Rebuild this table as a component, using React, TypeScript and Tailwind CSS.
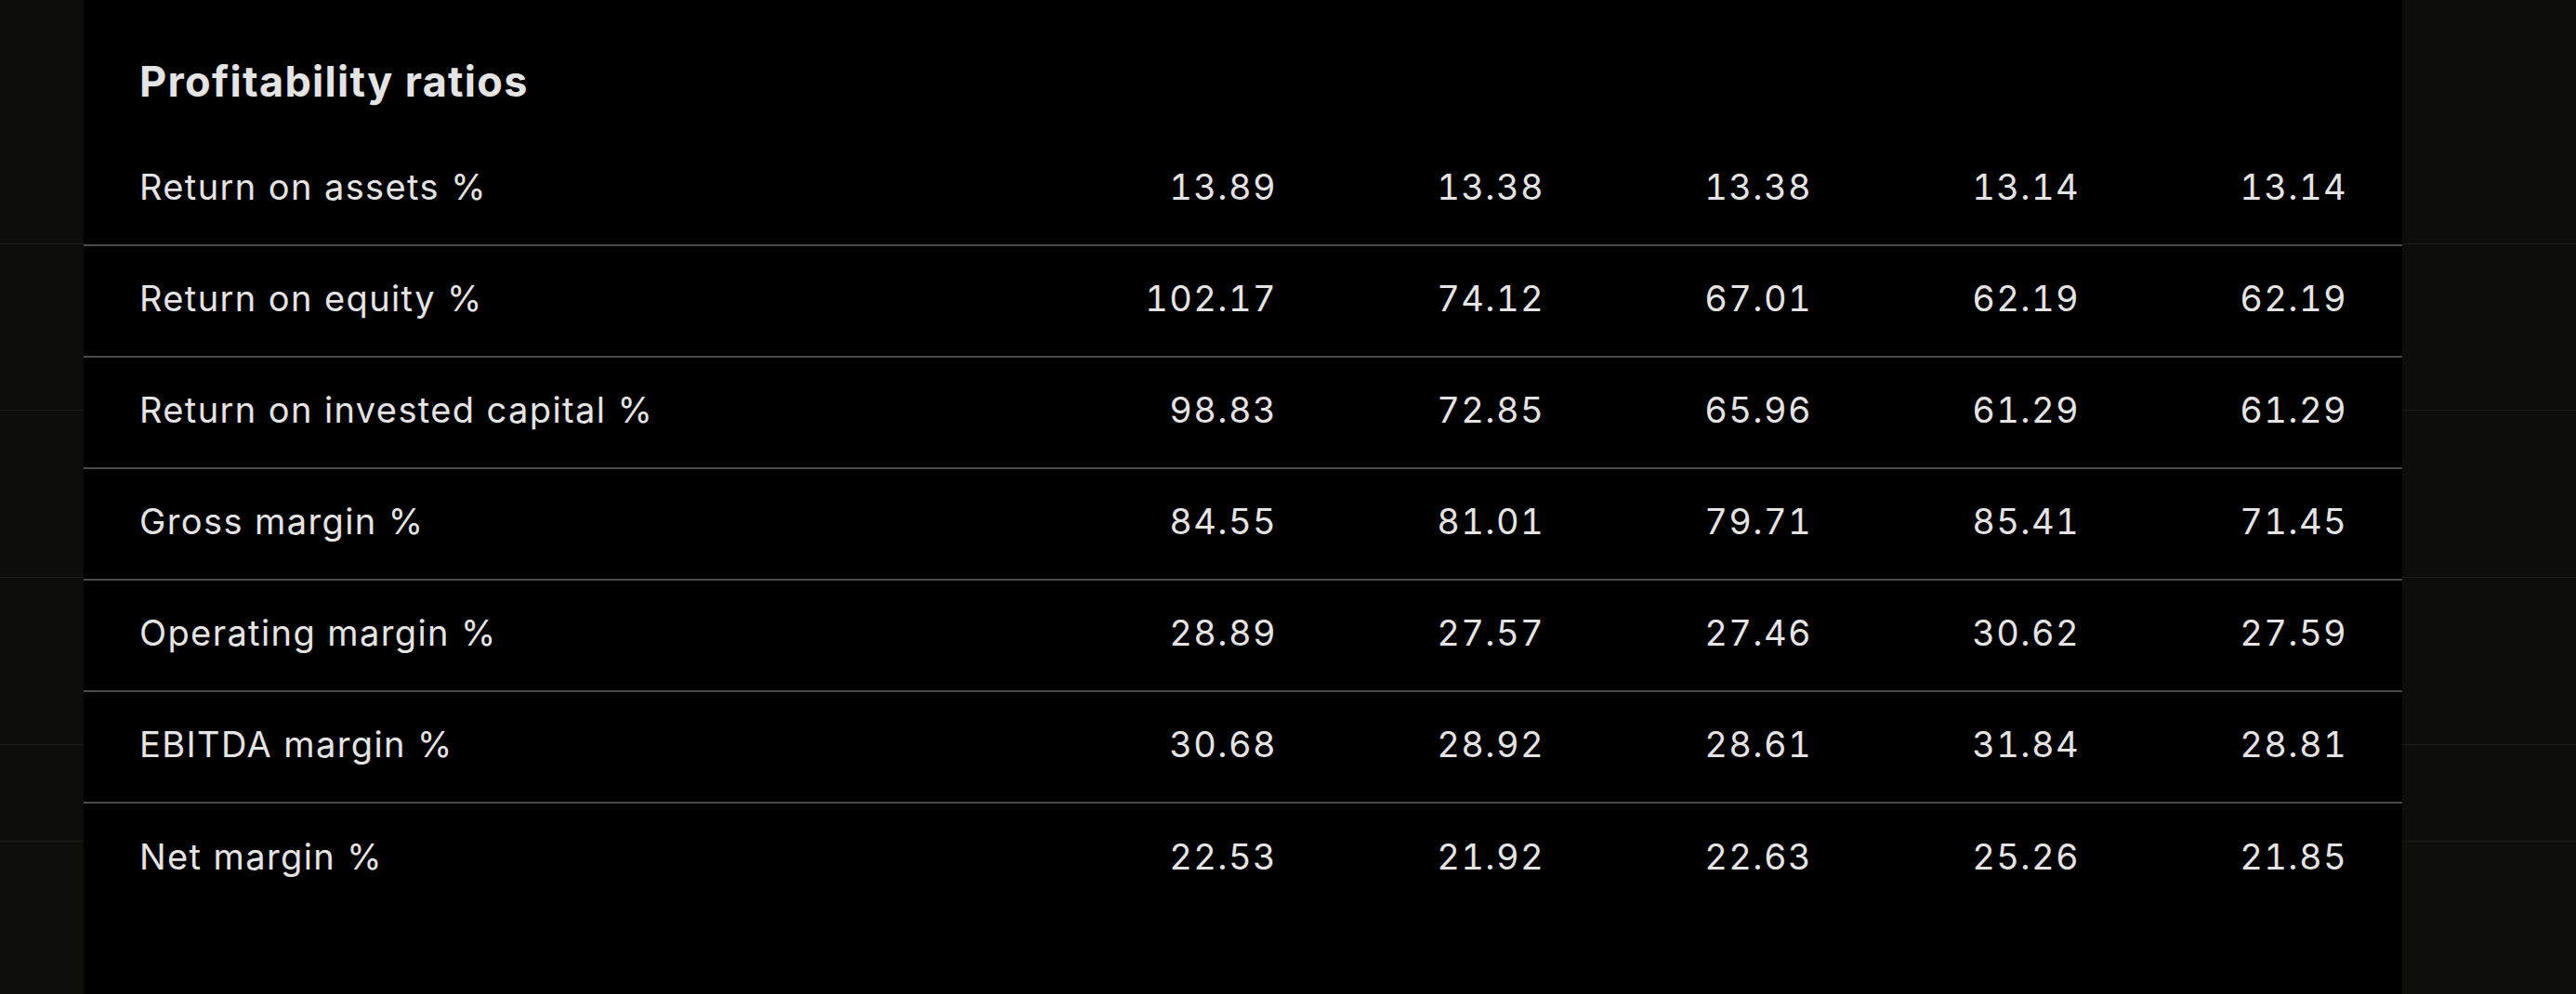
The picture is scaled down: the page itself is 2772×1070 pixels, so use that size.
const rows = [
  { label: 'Return on assets %', values: ['13.89', '13.38', '13.38', '13.14', '13.14'] },
  { label: 'Return on equity %', values: ['102.17', '74.12', '67.01', '62.19', '62.19'] },
  { label: 'Return on invested capital %', values: ['98.83', '72.85', '65.96', '61.29', '61.29'] },
  { label: 'Gross margin %', values: ['84.55', '81.01', '79.71', '85.41', '71.45'] },
  { label: 'Operating margin %', values: ['28.89', '27.57', '27.46', '30.62', '27.59'] },
  { label: 'EBITDA margin %', values: ['30.68', '28.92', '28.61', '31.84', '28.81'] },
  { label: 'Net margin %', values: ['22.53', '21.92', '22.63', '25.26', '21.85'] },
];

// faint rows of the page that sits behind the panel
const SideStrip = ({ width }: { width: string }) => (
  <div className={`${width} shrink-0 flex flex-col bg-[#0d0e0b]`}>
    <div className="h-[263px] border-b border-[#1c1d19]" />
    <div className="h-[179px] border-b border-[#1c1d19]" />
    <div className="h-[180px] border-b border-[#1c1d19]" />
    <div className="h-[180px] border-b border-[#1c1d19]" />
    <div className="h-[104px] border-b border-[#1c1d19]" />
    <div className="flex-1 bg-[#0e0f0b]" />
  </div>
);

const App = () => {
  return (
    <div
      className="flex w-full h-[1070px] overflow-hidden bg-[#0d0e0b]"
      style={{ fontFamily: 'Inter, "Noto Sans", sans-serif' }}
    >
      <SideStrip width="w-[90px]" />
      <div className="flex-1 bg-black flex flex-col">
        <h2 className="px-[60px] pt-[61px] text-[45px] leading-[54px] font-bold tracking-[1.3px] text-[#e4e4e4]">
          Profitability ratios
        </h2>
        <div className="mt-[30px]">
          {rows.map((row, i) => (
            <div
              key={row.label}
              className={`flex items-center h-[120px] pb-[6px] pl-[60px] pr-[59px] text-[38px] tracking-[1.4px] text-[#e4e4e4] ${
                i < rows.length - 1 ? 'border-b-2 border-[#4b4b4b]' : ''
              }`}
            >
              <div className="flex-1">{row.label}</div>
              {row.values.map((v, j) => (
                <div key={j} className="w-[288px] text-right tabular-nums">
                  {v}
                </div>
              ))}
            </div>
          ))}
        </div>
      </div>
      <SideStrip width="w-[187px]" />
    </div>
  );
};

export default App;
